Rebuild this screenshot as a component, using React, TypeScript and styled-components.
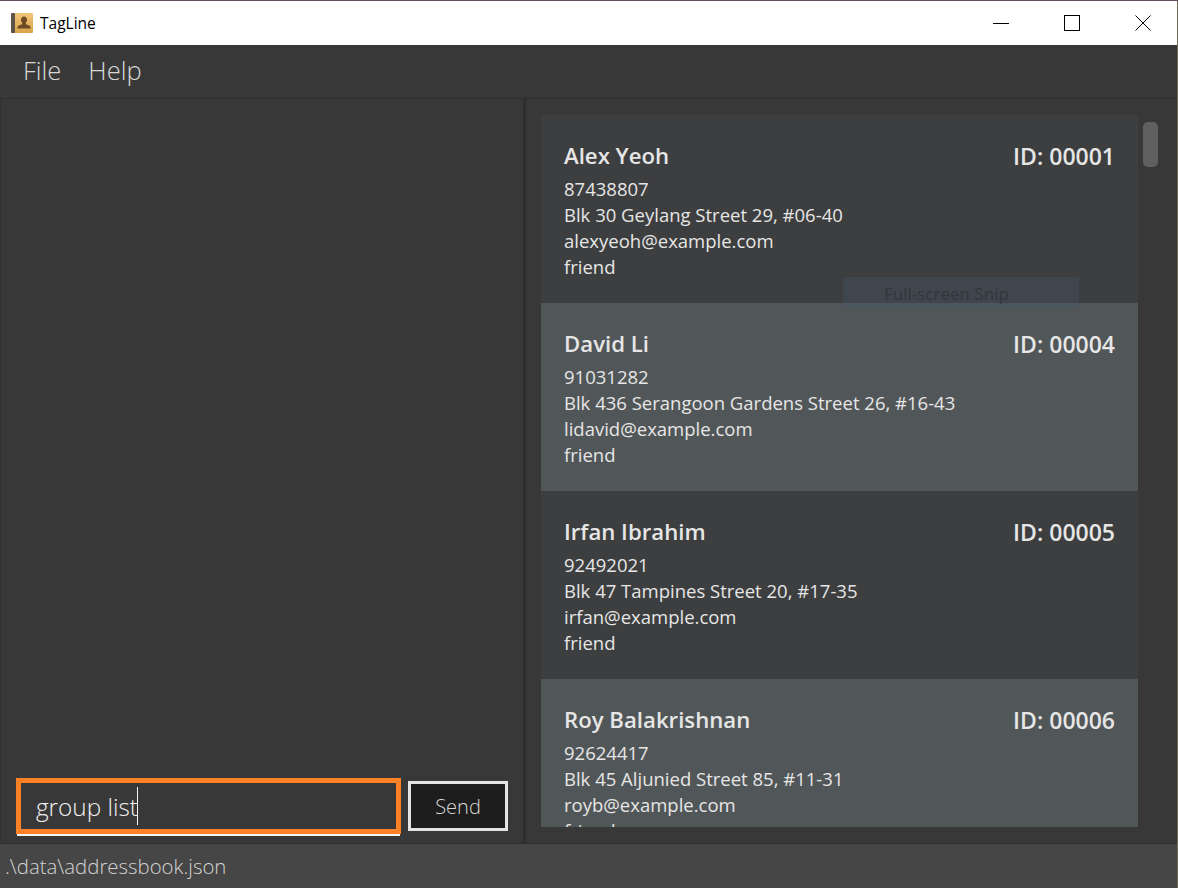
import { createGlobalStyle, styled } from 'styled-components';

const GlobalStyle = createGlobalStyle`
	html, body {
		margin: 0;
		padding: 0;
		background: #383838;
	}
	body {
		font-family: 'Open Sans', 'Noto Sans', sans-serif;
	}
`;

const Window = styled.div`
	position: relative;
	width: 1178px;
	height: 888px;
	display: flex;
	flex-direction: column;
	overflow: hidden;
	border-top: 1px solid #6b4a62;
	border-right: 1px solid #6e6e58;
	box-sizing: border-box;
`;

const TitleBar = styled.div`
	height: 44px;
	flex: none;
	background: #fff;
	display: flex;
	align-items: center;
	padding-left: 11px;
`;

const AppName = styled.span`
	margin-left: 7px;
	font-size: 15.5px;
	color: #000;
`;

const WindowButtons = styled.div`
	margin-left: auto;
	margin-right: -1px;
	display: flex;
	height: 100%;
`;

const WindowButton = styled.div`
	width: 71px;
	display: flex;
	align-items: center;
	justify-content: center;
`;

const MenuBar = styled.div`
	height: 54px;
	flex: none;
	box-sizing: border-box;
	background: #383838;
	border-bottom: 1px solid #2e2e2e;
	display: flex;
	align-items: center;
	gap: 27px;
	padding: 0 0 3px 23px;
`;

const MenuItem = styled.span`
	font-size: 25.5px;
	font-weight: 300;
	color: #d8d8d8;
`;

const Main = styled.div`
	flex: 1;
	min-height: 0;
	display: flex;
`;

const LeftPane = styled.div`
	width: 523px;
	flex: none;
	box-sizing: border-box;
	background: #383838;
	border-left: 1px solid #303030;
	display: flex;
	flex-direction: column;
	justify-content: flex-end;
	padding: 0 15px 9px 15px;
`;

const CommandRow = styled.div`
	display: flex;
	align-items: flex-start;
	gap: 7px;
`;

const CommandField = styled.div`
	width: 385px;
	height: 56px;
	box-sizing: border-box;
	border: 5px solid #fd8127;
	position: relative;
	display: flex;
	align-items: center;
	padding: 0 0 0 15px;
	font-size: 24.3px;
	font-weight: 300;
	color: #f2f2f2;
	&::after {
		content: '';
		position: absolute;
		left: -4px;
		right: -4px;
		bottom: -7px;
		height: 2px;
		background: #f4f4f4;
	}
`;

const Caret = styled.span`
	display: inline-block;
	width: 1px;
	height: 38px;
	background: #f2f2f2;
	margin-left: -1px;
`;

const SendButton = styled.div`
	width: 100px;
	height: 50px;
	margin-top: 3px;
	padding-top: 1px;
	box-sizing: border-box;
	background: #1d1d1d;
	border: 3px solid #e4e4e4;
	color: #d8d8d8;
	font-size: 20px;
	font-weight: 300;
	display: flex;
	align-items: center;
	justify-content: center;
`;

const Divider = styled.div`
	width: 3px;
	flex: none;
	background: #2e2e2e;
`;

const RightPane = styled.div`
	flex: 1;
	min-width: 0;
	background: #383838;
	display: flex;
	padding: 16px 0 16px 15px;
`;

const PersonList = styled.div`
	width: 597px;
	flex: none;
	overflow: hidden;
`;

const Card = styled.div<{ $alt: boolean }>`
	height: 188px;
	box-sizing: border-box;
	padding: 24px 23px 0 23px;
	background: ${(p) => (p.$alt ? '#515658' : '#3c3e3f')};
	color: #e6e6e6;
`;

const CardHead = styled.div`
	display: flex;
	justify-content: space-between;
	font-weight: 600;
	line-height: 34px;
	margin-bottom: 3px;
`;

const CardName = styled.span`
	font-size: 22.2px;
`;

const CardId = styled.span`
	font-size: 23px;
`;

const CardLine = styled.div`
	font-size: 18.5px;
	line-height: 26px;
`;

const ScrollTrack = styled.div`
	flex: 1;
	padding: 7px 0 0 5px;
`;

const ScrollThumb = styled.div`
	width: 15px;
	height: 45px;
	border-radius: 5px;
	background: #606060;
`;

const StatusBar = styled.div`
	height: 45px;
	flex: none;
	box-sizing: border-box;
	background: #464646;
	border-top: 1px solid #2e2e2e;
	padding-left: 5px;
	display: flex;
	align-items: center;
	font-size: 20.4px;
	font-weight: 300;
	color: #d4d4d4;
`;

const SnipTip = styled.div`
	position: absolute;
	left: 843px;
	top: 276px;
	width: 236px;
	height: 31px;
	box-sizing: border-box;
	padding-left: 41px;
	background: rgba(70, 85, 105, 0.35);
	color: #333739;
	font-size: 17px;
	line-height: 33px;
	white-space: nowrap;
`;

const people = [
	{ name: 'Alex Yeoh', id: '00001', phone: '87438807', address: 'Blk 30 Geylang Street 29, #06-40', email: 'alexyeoh@example.com' },
	{ name: 'David Li', id: '00004', phone: '91031282', address: 'Blk 436 Serangoon Gardens Street 26, #16-43', email: 'lidavid@example.com' },
	{ name: 'Irfan Ibrahim', id: '00005', phone: '92492021', address: 'Blk 47 Tampines Street 20, #17-35', email: 'irfan@example.com' },
	{ name: 'Roy Balakrishnan', id: '00006', phone: '92624417', address: 'Blk 45 Aljunied Street 85, #11-31', email: 'royb@example.com' },
];

function AppIcon() {
	return (
		<svg width="22" height="22" viewBox="0 0 22 22">
			<defs>
				<linearGradient id="cover" x1="0" y1="0" x2="0" y2="1">
					<stop offset="0" stopColor="#f0c67c" />
					<stop offset="1" stopColor="#dba24a" />
				</linearGradient>
			</defs>
			<rect x="0" y="1" width="22" height="20" rx="1" fill="url(#cover)" />
			<rect x="0" y="1" width="4" height="20" rx="1" fill="#5f5249" />
			<path d="M13 4.5c-1.8 0-3 1.4-3 3.3 0 1.3.5 2.3 1.2 3v1.4c-1.8.6-3.8 1-4.6 2.3V16.500h12.800V14.500c-.8-1.300-2.800-1.700-4.600-2.300v-1.400c.7-.7 1.200-1.700 1.200-3 0-1.900-1.200-3.300-3-3.300z" fill="#6b4a24" />
		</svg>
	);
}

export default function App() {
	return (
		<Window>
			<GlobalStyle />
			<TitleBar>
				<AppIcon />
				<AppName>TagLine</AppName>
				<WindowButtons>
					<WindowButton>
						<svg width="16" height="16" viewBox="0 0 16 16">
							<path d="M0 8.500H16" stroke="#000" fill="none" />
						</svg>
					</WindowButton>
					<WindowButton>
						<svg width="16" height="16" viewBox="0 0 16 16">
							<rect x="0.5" y="0.5" width="15" height="15" stroke="#000" fill="none" />
						</svg>
					</WindowButton>
					<WindowButton>
						<svg width="16" height="16" viewBox="0 0 16 16">
							<path d="M0.5 0.5L15.500 15.500M15.500 0.5L0.5 15.500" stroke="#000" fill="none" />
						</svg>
					</WindowButton>
				</WindowButtons>
			</TitleBar>
			<MenuBar>
				<MenuItem>File</MenuItem>
				<MenuItem>Help</MenuItem>
			</MenuBar>
			<Main>
				<LeftPane>
					<CommandRow>
						<CommandField>
							group list
							<Caret />
						</CommandField>
						<SendButton>Send</SendButton>
					</CommandRow>
				</LeftPane>
				<Divider />
				<RightPane>
					<PersonList>
						{people.map((person, index) => (
							<Card key={person.id} $alt={index % 2 === 1}>
								<CardHead>
									<CardName>{person.name}</CardName>
									<CardId>ID: {person.id}</CardId>
								</CardHead>
								<CardLine>{person.phone}</CardLine>
								<CardLine>{person.address}</CardLine>
								<CardLine>{person.email}</CardLine>
								<CardLine>friend</CardLine>
							</Card>
						))}
					</PersonList>
					<ScrollTrack>
						<ScrollThumb />
					</ScrollTrack>
				</RightPane>
			</Main>
			<StatusBar>.\data\addressbook.json</StatusBar>
			<SnipTip>Full-screen Snip</SnipTip>
		</Window>
	);
}
